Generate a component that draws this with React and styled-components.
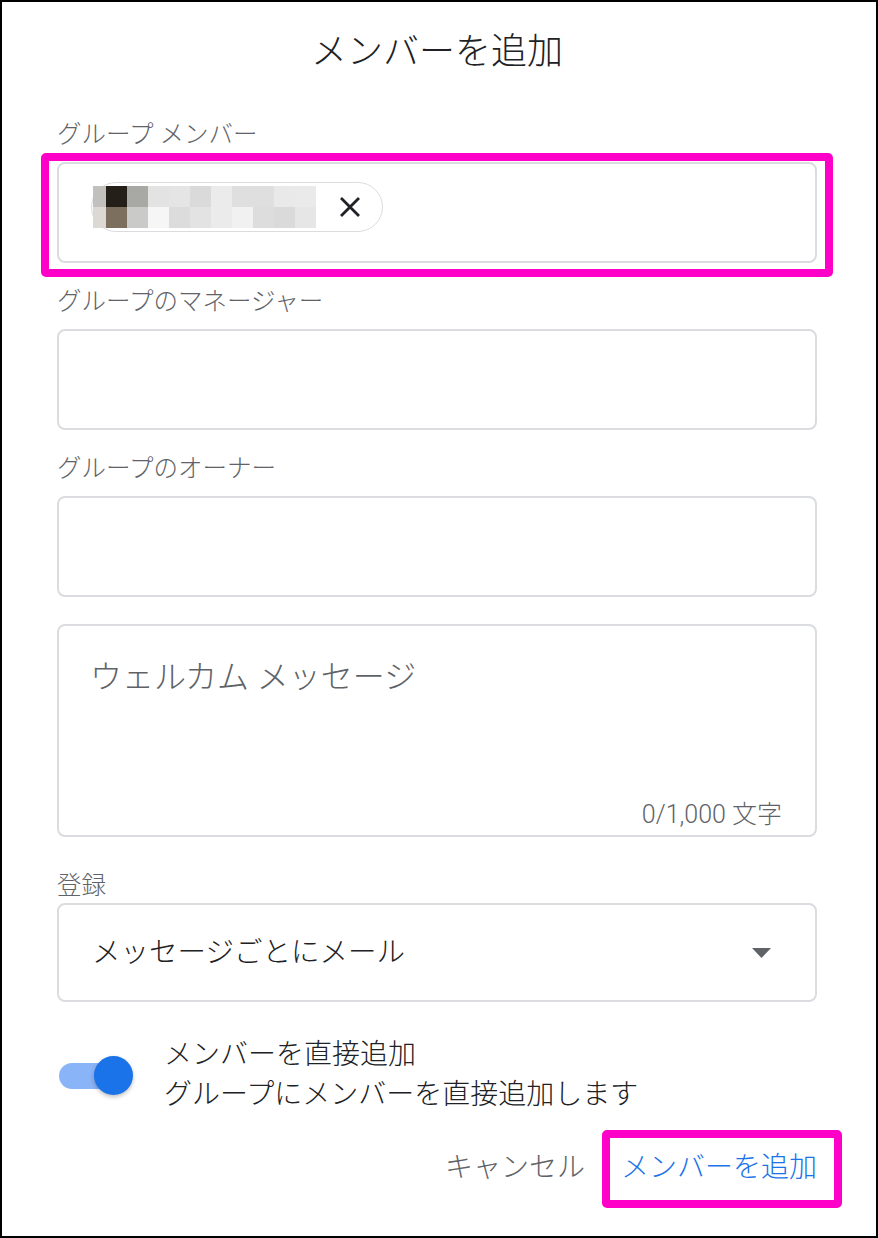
import React from 'react';
import styled, { createGlobalStyle } from 'styled-components';

const GlobalStyle = createGlobalStyle`
  html, body {
    margin: 0;
    padding: 0;
    background: #fff;
  }
  * {
    box-sizing: border-box;
  }
`;

const Dialog = styled.div`
  display: flex;
  flex-direction: column;
  width: 878px;
  height: 1238px;
  overflow: hidden;
  border: 2px solid #000;
  background: #fff;
  padding: 24px 59px 0 55px;
  font-family: Roboto, 'Noto Sans CJK JP', sans-serif;
  font-weight: 300;
  color: #202124;

  & > * {
    flex-shrink: 0;
  }
`;

const Title = styled.h1`
  margin: 0;
  font-size: 36px;
  font-weight: 300;
  line-height: 52px;
  text-align: center;
  color: #202124;
`;

const Field = styled.div`
  display: flex;
  flex-direction: column;
  margin-top: ${(p) => p.$top}px;
`;

const Label = styled.label`
  font-size: 24.5px;
  line-height: 32px;
  color: #5f6368;
  margin-bottom: ${(p) => (p.$tight ? 1 : 11)}px;
`;

const Box = styled.div`
  position: relative;
  display: flex;
  align-items: ${(p) => (p.$center ? 'center' : 'flex-start')};
  height: ${(p) => p.$h}px;
  border: 2px solid #dadce0;
  border-radius: 8px;
  padding: ${(p) => p.$pad || '0'};
  background: #fff;
`;

const Highlight = styled.div`
  position: absolute;
  top: -11px;
  left: -18px;
  right: -18px;
  bottom: -16px;
  border: 8px solid #ff00c8;
  border-radius: 5px;
  pointer-events: none;
`;

const Chip = styled.div`
  display: flex;
  align-items: center;
  height: 50px;
  border: 1.5px solid #dadce0;
  border-radius: 25px;
  padding: 0 20px 0 0;
  overflow: visible;
`;

const Mosaic = styled.svg`
  display: block;
  margin-left: 0.5px;
`;

const CloseButton = styled.button`
  display: flex;
  align-items: center;
  justify-content: center;
  width: 24px;
  height: 24px;
  margin-left: 22px;
  padding: 0;
  border: none;
  background: none;
  color: #202124;
`;

const TextArea = styled.div`
  display: flex;
  flex-direction: column;
  justify-content: space-between;
  height: 213px;
  border: 2px solid #dadce0;
  border-radius: 8px;
  padding: 30px 33px 6px 31px;
  margin-top: 27px;
`;

const Placeholder = styled.div`
  font-size: 32px;
  line-height: 42px;
  color: #5f6368;
`;

const Counter = styled.div`
  align-self: flex-end;
  font-size: 25px;
  line-height: 28px;
  color: #5f6368;
`;

const SelectText = styled.div`
  flex: 1;
  font-size: 28.5px;
  line-height: 40px;
  color: #202124;
`;

const ToggleRow = styled.div`
  display: flex;
  align-items: center;
  margin-top: 33px;
`;

const Toggle = styled.div`
  position: relative;
  width: 74px;
  height: 39px;
  flex-shrink: 0;
  margin-left: 2px;
`;

const Track = styled.div`
  position: absolute;
  left: 0;
  top: 7px;
  width: 64px;
  height: 26px;
  border-radius: 13px;
  background: #8ab4f8;
`;

const Knob = styled.div`
  position: absolute;
  right: 0;
  top: 0;
  width: 39px;
  height: 39px;
  border-radius: 50%;
  background: #1a73e8;
  box-shadow: 0 2px 4px rgba(0, 0, 0, 0.25);
`;

const ToggleText = styled.div`
  margin-left: 31px;
  font-size: 28px;
  line-height: 40px;
  color: #202124;
`;

const Actions = styled.div`
  display: flex;
  justify-content: flex-end;
  align-items: center;
  gap: 36px;
  margin-top: 33px;
`;

const TextButton = styled.button`
  position: relative;
  padding: 0;
  border: none;
  background: none;
  font-family: inherit;
  font-weight: 300;
  font-size: 28px;
  line-height: 40px;
  color: ${(p) => (p.$primary ? '#1a73e8' : '#5f6368')};
`;

const ButtonHighlight = styled.span`
  position: absolute;
  top: -18px;
  left: -19px;
  right: -25px;
  bottom: -20px;
  border: 8px solid #ff00c8;
  border-radius: 5px;
`;

const mosaic = [
  ['#c1c0bc', '#241f18', '#a8a8a4', '#e3e3e3', '#e5e5e5', '#dadada', '#ebebeb', '#dfdfdf', '#dfdfdf', '#e9e9e9', '#eaeaea'],
  ['#dcd9d4', '#7c6f5e', '#cacac8', '#f6f6f6', '#dcdcdc', '#e3e3e3', '#ebebeb', '#f1f1f1', '#dddddd', '#dadada', '#e6e6e6'],
];

const MemberChip = () => (
  <Chip>
    <Mosaic width="223" height="42" viewBox="0 0 223 42">
      {mosaic.map((row, r) =>
        row.map((c, i) => (
          <rect
            key={`${r}-${i}`}
            x={i === 0 ? 0 : 13 + (i - 1) * 21}
            y={r * 21}
            width={i === 0 ? 13 : 21}
            height="21"
            fill={c}
          />
        ))
      )}
    </Mosaic>
    <CloseButton aria-label="削除">
      <svg width="24" height="24" viewBox="0 0 24 24">
        <path d="M3 3 L21 21 M21 3 L3 21" stroke="currentColor" strokeWidth="2.8" />
      </svg>
    </CloseButton>
  </Chip>
);

const App = () => {
  return (
    <>
      <GlobalStyle />
      <Dialog>
        <Title>メンバーを追加</Title>

        <Field $top={41}>
          <Label>グループ メンバー</Label>
          <Box $h={101} $pad="18px 0 0 32px">
            <MemberChip />
            <Highlight />
          </Box>
        </Field>

        <Field $top={23}>
          <Label>グループのマネージャー</Label>
          <Box $h={101} />
        </Field>

        <Field $top={23}>
          <Label>グループのオーナー</Label>
          <Box $h={101} />
        </Field>

        <TextArea>
          <Placeholder>ウェルカム メッセージ</Placeholder>
          <Counter>0/1,000 文字</Counter>
        </TextArea>

        <Field $top={33}>
          <Label $tight>登録</Label>
          <Box $h={99} $center $pad="0 44px 0 33px">
            <SelectText>メッセージごとにメール</SelectText>
            <svg width="19" height="10" viewBox="0 0 19 10">
              <polygon points="0,0 19,0 9.5,10" fill="#5f6368" />
            </svg>
          </Box>
        </Field>

        <ToggleRow>
          <Toggle>
            <Track />
            <Knob />
          </Toggle>
          <ToggleText>
            メンバーを直接追加
            <br />
            グループにメンバーを直接追加します
          </ToggleText>
        </ToggleRow>

        <Actions>
          <TextButton>キャンセル</TextButton>
          <TextButton $primary>
            メンバーを追加
            <ButtonHighlight />
          </TextButton>
        </Actions>
      </Dialog>
    </>
  );
};

export default App;
